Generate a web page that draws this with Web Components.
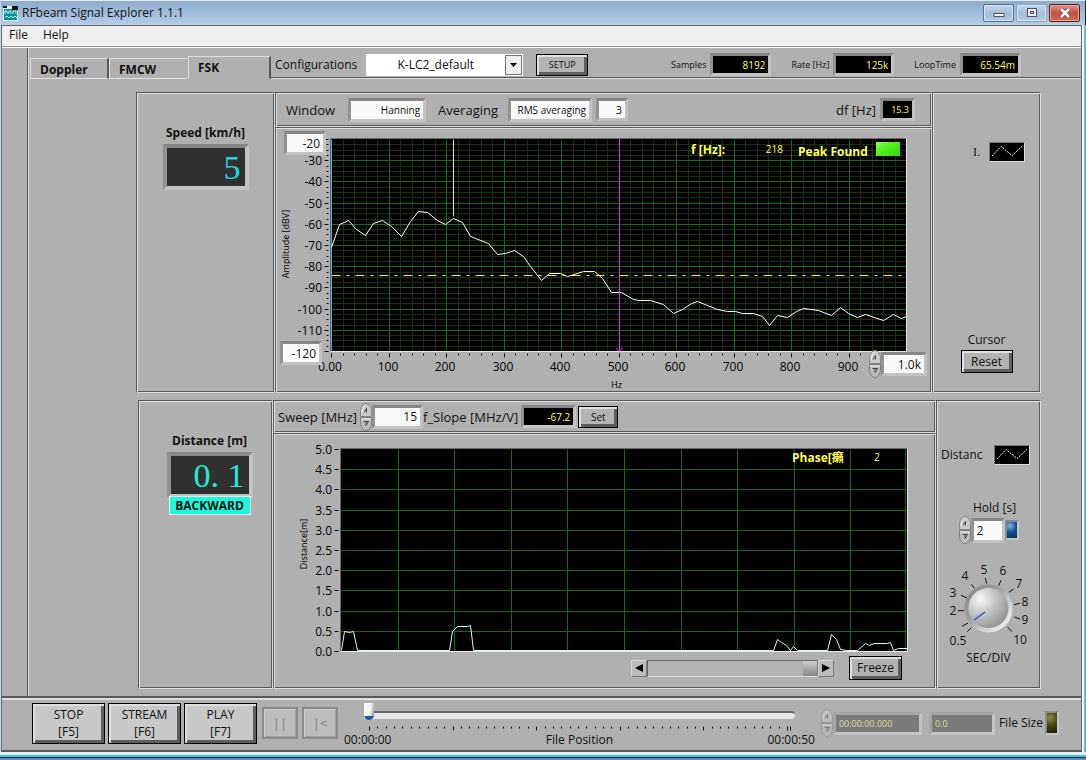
<!DOCTYPE html>
<html lang="en">
<head>
<meta charset="utf-8">
<title>RFbeam Signal Explorer 1.1.1</title>
<style>
  html, body { margin: 0; background: #b0b0b0; }
  body {
    font: 12px/16px "Open Sans", "Noto Sans CJK SC", sans-serif; color: #111;
    --dark: #585858; --light: #dedede; --face: #b0b0b0;
  }
</style>
</head>
<body>
<app-window></app-window>
<script>
const define = (name, html, setup) => {
  const tpl = document.createElement('template');
  tpl.innerHTML = html;
  customElements.define(name, class extends HTMLElement {
    connectedCallback() {
      if (this.shadowRoot) return;
      this.attachShadow({ mode: 'open' }).append(tpl.content.cloneNode(true));
      if (setup) setup(this, this.shadowRoot);
    }
  });
};

/* Engraved group box */
define('lv-panel', `
<style>
  :host { display: block; min-width: 0; box-sizing: border-box; padding: 1px; border: 1px solid;
    border-color: var(--dark) var(--light) var(--light) var(--dark);
    box-shadow: inset 1px 1px var(--light), inset -1px -1px var(--dark); }
</style><slot></slot>`);

/* Raised push button */
define('lv-button', `
<style>
  :host { display: block; }
  button { display: block; width: 100%; height: 100%; margin: 0; padding: 0 2px; box-sizing: border-box;
    font: inherit; color: #111; text-align: center; background: var(--btn, #b3b3b3);
    border: 1px solid #000; outline: 0;
    box-shadow: inset 2px 2px #dedede, inset -3px -3px #5e5e5e; }
  :host([flat]) button { color: #808080; border: 2px solid #8a8a8a;
    box-shadow: inset 1px 1px #cfcfcf, inset -1px -1px #a0a0a0; }
</style><button type="button"><slot></slot></button>`, (host, root) => {
  const b = root.querySelector('button');
  if (host.hasAttribute('flat')) b.disabled = true;
  if (host.getAttribute('name')) b.setAttribute('aria-label', host.getAttribute('name'));
});

/* Pair of increment / decrement nubs */
define('lv-nubs', `
<style>
  :host { display: block; width: 12px; height: 28px; flex: none; }
  button { display: block; width: 12px; height: 14px; padding: 0; border: 0; background: none; }
  svg { display: block; }
</style>
<button type="button" aria-label="Increment"><svg width="12" height="14">
  <path d="M.5 13.500V9C.5 4 3 .5 6 .5S11.500 4 11.500 9v4.500z" fill="#c9c9c9" stroke="#858585"/><path d="M2 10C2.500 5 4.500 2.500 6 2.500" stroke="#f4f4f4" fill="none"/>
  <path d="M4 9.500L6.500 5.500v4" fill="none" stroke="#444"/></svg></button>
<button type="button" aria-label="Decrement"><svg width="12" height="14">
  <path d="M.5.5V5c0 5 2.500 8.500 5.500 8.500S11.500 10 11.500 5V.5z" fill="#bdbdbd" stroke="#7c7c7c"/><path d="M1 2h10" stroke="#f0f0f0"/>
  <path d="M3.500 4.500h5L6 8.500v-4" fill="none" stroke="#444"/></svg></button>`);

/* Sunken value box with optional label and nubs */
define('lv-field', `
<style>
  :host { display: flex; align-items: center; }
  label { margin-right: var(--gap, 4px); white-space: pre; }
  label[hidden] { display: none; }
  input { display: block; width: var(--w, 61px); height: var(--h, 23px); box-sizing: border-box; margin: 0; padding: 0 3px;
    border: 3px solid; border-color: #868686 #c2c2c2 #c2c2c2 #929292; border-radius: 0; outline: 0;
    font: inherit; font-size: var(--size, inherit); text-align: right; background: #fafafa; color: #111; }
  :host([dark]) input { background: #000; color: #ffff60; }
  :host([dim]) input { background: #7b7b7b; color: #dede9c; text-align: left;
    border-color: #a6a6a6 #c4c4c4 #c4c4c4 #a6a6a6; opacity: 1; }
  :host([left]) input { text-align: left; }
  :host([dim]) lv-nubs { opacity: .5; }
</style>
<label for="v"></label><input id="v" type="text">`, (host, root) => {
  const input = root.querySelector('input'), label = root.querySelector('label');
  input.value = host.getAttribute('value');
  input.readOnly = host.hasAttribute('dark') || host.hasAttribute('dim');
  label.textContent = host.getAttribute('label') || '';
  if (!label.textContent) { label.hidden = true; input.setAttribute('aria-label', host.getAttribute('name')); }
  if (host.hasAttribute('nubs')) input.before(document.createElement('lv-nubs'));
});

/* Sunken ring selector */
define('lv-ring', `
<style>
  :host { display: flex; align-items: center; }
  label { margin-right: var(--gap, 10px); font-size: 13px; }
  select { width: var(--w); height: 24px; box-sizing: border-box; appearance: none; margin: 0; padding: 0 3px;
    border: 3px solid; border-color: #868686 #c2c2c2 #c2c2c2 #929292; border-radius: 0;
    font: inherit; font-size: 10px; text-align-last: right; background: #fafafa; color: #111; }
</style>
<label for="s"></label><select id="s"><option></option></select>`, (host, root) => {
  root.querySelector('label').textContent = host.getAttribute('label');
  root.querySelector('option').textContent = host.getAttribute('value');
});

define('lv-led', `
<style>
  :host { display: block; width: 14px; height: 20px; flex: none; box-sizing: border-box; border: 2px solid;
    border-color: #8a8a8a #c6c6c6 #c6c6c6 #8a8a8a;
    background: radial-gradient(circle at 30% 25%, var(--hot), var(--on) 45%, var(--off)); }
</style>`);

/* Plot legend sample */
define('plot-legend', `
<style>
  :host { display: flex; align-items: center; justify-content: flex-end; }
  svg { display: block; background: #000; border: 1px solid #777; border-right-color: #ddd; border-bottom-color: #ddd; }
</style><slot></slot>
<svg width="34" height="18" viewBox="0 0 34 18"><path d="M2 13L11 3.500l11 9L32 3.500" fill="none" stroke="#fff" stroke-dasharray="2 1"/></svg>`);

/* Large digital readout with a caption */
define('big-readout', `
<style>
  :host { display: flex; flex-direction: column; align-items: center; }
  label { font-weight: 700; margin-bottom: 3px; }
  output { box-sizing: border-box; width: 86px; height: 46px; padding-right: 4px; text-align: right;
    border: 4px solid; border-color: #868686 #c4c4c4 #c4c4c4 #929292; background: #303030; color: var(--ink, #22d6e6);
    font: 34px/40px "Liberation Serif", serif; }
  .dot { display: inline-block; width: 17px; text-align: left; }
</style><label for="o"></label><output id="o"></output>`, (host, root) => {
  root.querySelector('label').textContent = host.getAttribute('label');
  root.querySelector('output').innerHTML = host.getAttribute('value').replace('.', '<span class="dot">.</span>');
});

/* Shared chart drawing */
const line = (x1, y1, x2, y2, c, extra = '') =>
  `<path d="M${Math.round(x1) + .5} ${Math.round(y1) + .5}L${Math.round(x2) + .5} ${Math.round(y2) + .5}" stroke="${c}" ${extra}/>`;
const text = (x, y, s, extra = '') => `<text x="${x}" y="${y}" ${extra}>${s}</text>`;
const trace = (pts, box, w, h, c) => `<polyline fill="none" stroke="${c}" points="${pts.split(' ').map(p => {
  const [x, y] = p.split(',').map(Number);
  return (box.x + x * box.w / w + .5).toFixed(1) + ',' + (box.y + y * box.h / h + .5).toFixed(1);
}).join(' ')}"/>`;
const chart = (svg, draw) => {
  const run = () => { svg.innerHTML = draw(svg.clientWidth, svg.clientHeight); };
  run();
  new ResizeObserver(run).observe(svg);
};
const frame = b => `<rect x="${b.x}" y="${b.y}" width="${b.w}" height="${b.h}"/>`;
const edge = b => line(b.x - 1, b.y - 1, b.x + b.w, b.y - 1, '#6a6a6a') + line(b.x - 1, b.y - 1, b.x - 1, b.y + b.h, '#6a6a6a')
  + line(b.x + b.w, b.y - 1, b.x + b.w, b.y + b.h, '#e8e8e8') + line(b.x - 1, b.y + b.h, b.x + b.w, b.y + b.h, '#e8e8e8');

const SPECTRUM = '0,108 8,85 17,81 25,90 34,96 42,84 51,81 60,87 70,97 79,82 87,72 96,73 106,81 114,85 122,79 131,83 139,97 157,104 166,115 174,114 183,111 192,117 199,127 210,141 218,134 229,134 236,137 246,134 252,132 263,132 271,139 280,153 290,153 302,160 307,161 319,161 332,165 342,174 351,170 360,164 366,162 386,170 396,172 404,172 411,174 422,174 431,177 438,186 446,176 456,178 465,172 472,169 487,171 500,176 509,168 517,174 526,178 534,175 543,178 552,181 562,175 570,179 575,177';
const DISTANCE = '0,201 3,182 8,183 12,182 16,201 108,201 111,182 116,177 126,177 129,176 132,201 432,201 436,190 440,193 445,196 449,201 452,197 456,201 486,201 490,185 495,190 499,200 505,201 516,201 524,194 528,196 533,194 546,194 549,193 552,201 557,199 566,199';

define('spectrum-plot', `
<style>
  :host { display: block; position: relative; height: 100%; min-height: 262px; }
  svg { display: block; width: 100%; height: 262px; font: inherit; overflow: visible; }
  lv-field { position: absolute; --h: 24px; }
  .top { left: 7px; top: 2px; --w: 42px; }
  .bottom { left: 3px; bottom: 26px; --w: 42px; }
  .right { right: 3px; bottom: 13px; --w: 46px; }
</style>
<svg role="img" aria-label="Amplitude spectrum"></svg>
<lv-field class="top" name="Maximum amplitude" value="-20"></lv-field>
<lv-field class="bottom" name="Minimum amplitude" value="-120"></lv-field>
<lv-field class="right" name="Maximum frequency" value="1.0k" nubs></lv-field>`, (host, root) => {
  chart(root.querySelector('svg'), (W, H) => {
    const b = { x: 54, y: 10, w: W - 78, h: H - 50 };
    let s = frame(b);
    for (let i = 1; i < 50; i++) if (i % 5) s += line(b.x + i * b.w / 50, b.y, b.x + i * b.w / 50, b.y + b.h - 1, '#1c3010');
    for (let i = 1; i < 40; i++) if (i % 4) s += line(b.x, b.y + i * b.h / 40, b.x + b.w - 1, b.y + i * b.h / 40, '#1c3010');
    for (let i = 1; i < 10; i++) {
      s += line(b.x + i * b.w / 10, b.y, b.x + i * b.w / 10, b.y + b.h - 1, '#176a1c');
      s += line(b.x, b.y + i * b.h / 10, b.x + b.w - 1, b.y + i * b.h / 10, '#176a1c');
    }
    s += edge(b);
    for (let i = 0; i <= 40; i++) { const y = b.y + i * b.h / 40; s += line(b.x - (i % 4 ? 5 : 7), y, b.x - 3, y, '#111'); }
    for (let i = 0; i < 50; i++) { const x = b.x + i * b.w / 50; s += line(x, b.y + b.h + 2, x, b.y + b.h + (i % 5 ? 4 : 6), '#111'); }
    for (let i = 1; i < 10; i++) s += text(b.x - 9, Math.round(b.y + i * b.h / 10) + 5, -20 - i * 10, 'text-anchor="end"');
    for (let i = 0; i < 10; i++) s += text(Math.round(b.x + i * b.w / 10) - 1, b.y + b.h + 20, i ? i * 100 : '0.00', 'text-anchor="middle"');
    s += text(b.x + b.w / 2 - 2, b.y + b.h + 37, 'Hz', 'text-anchor="middle" font-size="9"');
    s += `<text transform="translate(12 ${b.y + b.h / 2 - 1}) rotate(-90)" text-anchor="middle" font-size="9">Amplitude [dBV]</text>`;
    s += line(b.x, b.y + 136, b.x + b.w - 1, b.y + 136, '#ffe83c', 'stroke-dasharray="9 6 3 6"');
    s += line(b.x, b.y, b.x, b.y + b.h - 1, '#4aa8e0');
    s += trace(SPECTRUM, b, 575, 212, '#fff');
    s += line(b.x + b.w * .2122, b.y, b.x + b.w * .2122, b.y + 77, '#ffe45a');
    const m = Math.round(b.x + b.w / 2);
    s += `<rect x="${m}" y="${b.y}" width="1" height="${b.h}" fill="#e030e0"/>`
      + `<path d="M${m - 3} ${b.y + b.h - 3}l3.500 3l3.500-3" fill="none" stroke="#e030e0"/>`;
    const r = b.x + b.w, y = b.y + 15;
    s += `<g fill="#ffff55" font-weight="700">` + text(r - 215, y, 'f [Hz]:') + text(r - 108, y + 2, 'Peak Found') + `</g>`
      + text(r - 123, b.y + 14, '218', 'fill="#ffff55" font-size="10" text-anchor="end"')
      + `<defs><linearGradient id="g" x2="1" y2="1"><stop offset="0" stop-color="#8cff5c"/><stop offset=".4" stop-color="#52f01c"/><stop offset="1" stop-color="#3cd40c"/></linearGradient></defs>`
      + `<rect x="${r - 30}" y="${b.y + 3}" width="24" height="14" fill="url(#g)"/>`;
    return s;
  });
});

define('distance-plot', `
<style>
  :host { display: block; min-height: 252px; }
  svg { display: block; width: 100%; height: 218px; font: inherit; overflow: visible; }
  .bar { display: flex; align-items: center; justify-content: flex-end; padding-right: 32px; height: 30px; }
  .scroll { display: flex; width: 203px; height: 17px; margin-right: 15px; }
  .scroll button { width: 16px; padding: 0; border: 1px solid; border-color: #d6d6d6 #777 #777 #d6d6d6; background: #bcbcbc; }
  .scroll svg { width: 14px; height: 14px; }
  input { appearance: none; flex: 1; min-width: 0; margin: 0; box-sizing: border-box; border: 1px solid; border-color: #666 #ddd #ddd #666; background: #b3b3b3; border-right: 0; }
  input::-webkit-slider-thumb { appearance: none; width: 15px; height: 15px; background: linear-gradient(#cfcfcf, #858585); border-right: 1px solid #777; }
  lv-button { width: 53px; height: 24px; }
</style>
<svg role="img" aria-label="Distance over time"></svg>
<div class="bar">
  <div class="scroll">
    <button type="button" aria-label="Scroll left"><svg viewBox="0 0 14 14"><path d="M11 3v8L3 7z"/></svg></button>
    <input type="range" min="0" max="100" value="100" aria-label="Time scroll">
    <button type="button" aria-label="Scroll right"><svg viewBox="0 0 14 14"><path d="M3 3v8l8-4z"/></svg></button>
  </div>
  <lv-button>Freeze</lv-button>
</div>`, (host, root) => {
  chart(root.querySelector('svg'), (W, H) => {
    const b = { x: 66, y: 14, w: W - 93, h: H - 16 };
    let s = frame(b);
    for (let i = 1; i < 10; i++) {
      s += line(b.x + i * b.w / 10, b.y, b.x + i * b.w / 10, b.y + b.h - 1, '#176a1c');
      s += line(b.x, b.y + i * b.h / 10, b.x + b.w - 1, b.y + i * b.h / 10, '#176a1c');
    }
    s += line(b.x + b.w - 2, b.y, b.x + b.w - 2, b.y + b.h, '#176a1c') + edge(b);
    for (let i = 0; i <= 10; i++) {
      const y = Math.round(b.y + i * b.h / 10);
      s += line(b.x - 7, y, b.x - 3, y, '#111') + text(b.x - 9, y + 5, (5 - i / 2).toFixed(1), 'text-anchor="end"');
    }
    s += `<text transform="translate(32 ${b.y + b.h / 2 - 6}) rotate(-90)" text-anchor="middle" font-size="9">Distance[m]</text>`;
    s += trace(DISTANCE, b, 566, 202, '#d8fff4');
    s += text(b.x + b.w - 115, b.y + 13, 'Phase[癩', 'fill="#ffff55" font-weight="700"')
      + text(b.x + b.w - 33, b.y + 12, '2', 'fill="#ffff55" font-size="10"');
    return s;
  });
});

define('sec-knob', `
<style>
  :host { display: flex; flex-direction: column; align-items: center; }
  svg { display: block; font: inherit; overflow: visible; }
</style>
<svg width="96" height="88" role="slider" aria-label="SEC/DIV" aria-valuemin="0.5" aria-valuemax="10" aria-valuenow="1">
  <defs>
    <radialGradient id="k" cx=".3" cy=".28" r=".85"><stop offset="0" stop-color="#f8f8f8"/><stop offset=".45" stop-color="#c4c4c4"/><stop offset="1" stop-color="#8c8c8c"/></radialGradient>
    <linearGradient id="b" x2="1" y2="1"><stop offset="0" stop-color="#808080"/><stop offset=".45" stop-color="#a4a4a4"/><stop offset=".65" stop-color="#d0d0d0"/><stop offset="1" stop-color="#fff"/></linearGradient>
  </defs>
  <path stroke="#111" d="M30.300 65.700l-4 4M27 61l-6 3.300M23 48.700h-6M26.300 36.300l-6.300-3M33.700 26.300l-3.400-4M45.700 21.700l-1.400-5.700M57.700 23.700l2.300-5.400M68 30.300l4.700-3.300M73 42.700l6-1.400M73.300 55l5.700 2M66.300 64.700l4.700 5"/>
  <circle cx="47.500" cy="46.500" r="24" fill="url(#b)"/>
  <circle cx="47.500" cy="46" r="20" fill="url(#k)"/>
  <path d="M33 58l11-8" stroke="#2450c8" stroke-width="1.500"/>
  <g text-anchor="middle" fill="#111">
    <text x="17" y="83">0.5</text><text x="12" y="53">2</text><text x="12" y="35">3</text><text x="24" y="18">4</text><text x="43" y="12">5</text>
    <text x="62" y="13">6</text><text x="78" y="26">7</text><text x="84" y="44">8</text><text x="84" y="62">9</text><text x="79" y="82">10</text>
  </g>
</svg>
<span>SEC/DIV</span>`);

define('title-bar', `
<style>
  :host { display: flex; align-items: center; height: 25px; padding: 0 5px 0 2px; box-sizing: border-box;
    background: linear-gradient(#8faccc, #9db9d8 40%, #b4cde8); border-top: 1px solid #e8eef6; }
  svg { display: block; }
  .name { margin: 0 auto 0 4px; }
  button { display: flex; align-items: center; justify-content: center; width: 31px; height: 18px; margin-left: 2px; padding: 0; border: 1px solid #55708f;
    border-radius: 2px; background: linear-gradient(#c6d8ec, #a3bddb 50%, #b3cbe6); box-shadow: inset 0 0 0 1px #d8e6f4; }
  .close { border-color: #5a2018; background: linear-gradient(#dc9a8c, #c4503c 50%, #cc6a54); box-shadow: inset 0 0 0 1px #e8a898; }
  .max { border-color: #8ba5c4; }
</style>
<svg width="15" height="15"><path fill="#dff" d="M0 0h15v15H0z"/><path fill="#0a8c94" d="M1 3h13v11H1z"/><path fill="#111" d="M9 0h6v4H9zM0 0h4v2H0z"/>
  <path d="M2 8V5h2v2h2V5h2v3M10 8V5h3v3M2 11l2-1 2 2 2-2 2 2 2-2 2 2" fill="none" stroke="#aef4ee"/></svg>
<span class="name">RFbeam Signal Explorer 1.1.1</span>
<button type="button" aria-label="Minimize"><svg width="12" height="10"><rect x="1" y="5.500" width="10" height="3" fill="#fff" stroke="#555"/></svg></button>
<button class="max" type="button" aria-label="Maximize"><svg width="12" height="10"><rect x="1.500" y=".5" width="9" height="8" fill="#eef" stroke="#555"/><rect x="4.500" y="3.500" width="3" height="2" fill="#b3cbe6" stroke="#555"/></svg></button>
<button class="close" type="button" aria-label="Close"><svg width="12" height="10"><path d="M2 1l8 8M10 1L2 9" stroke="#644" stroke-width="4"/><path d="M2 1l8 8M10 1L2 9" stroke="#fff" stroke-width="2.500"/></svg></button>`);

define('menu-bar', `
<style>
  :host { display: flex; height: 22px; box-sizing: border-box; padding: 0 7px; gap: 15px; background: #f0f0f0;
    border-top: 1px solid #666; border-bottom: 1px solid #909090; }
  button { font: inherit; color: inherit; padding: 0; border: 0; background: none; height: 18px; }
</style><button type="button">File</button><button type="button">Help</button>`);

define('tool-strip', `
<style>
  :host { display: flex; align-items: flex-end; height: 31px; padding-left: 2px; }
  .tab { width: 79px; height: 21px; box-sizing: border-box; padding: 0 0 0 9px; overflow: hidden; text-align: left; font: inherit; font-weight: 700; color: #111;
    border: 1px solid; border-color: var(--light) var(--dark) var(--light) var(--light); border-right-width: 2px; background: none; line-height: 22px; }
  .tab.mid { border-right-width: 1px; border-right-color: var(--face); }
  .tab.on { width: 83px; height: 23px; border-bottom-color: transparent; }
  .tools { flex: 1; display: flex; align-items: center; height: 31px; box-sizing: border-box; padding: 3px 60px 0 4px;
    border-bottom: 1px solid var(--light); box-shadow: inset 0 -1px var(--dark); }
  .tools > label { margin-right: 9px; }
  .combo { position: relative; width: 157px; height: 22px; margin-right: 13px; background: #fff; }
  select { appearance: none; width: 100%; height: 22px; border: 0; margin: 0; padding: 0 18px 0 0; font: inherit; background: #fff; color: #111; text-align-last: center; }
  .combo svg { position: absolute; right: 1px; top: 1px; pointer-events: none; }
  lv-button { width: 52px; height: 22px; font-size: 9px; }
  .reads { display: flex; gap: 20px; margin-left: auto; font-size: 9px; --size: 10px; }
</style>
<button class="tab" type="button">Doppler</button><button class="tab mid" type="button">FMCW</button><button class="tab on" type="button">FSK</button>
<div class="tools">
  <label for="cfg">Configurations</label>
  <div class="combo"><select id="cfg"><option>K-LC2_default</option></select>
    <svg width="17" height="20"><rect x=".5" y=".5" width="16" height="19" fill="#eee" stroke="#777"/><path d="M5 8h7l-3.500 4z"/></svg></div>
  <lv-button>SETUP</lv-button>
  <div class="reads">
    <lv-field dark label="Samples" value="8192"></lv-field>
    <lv-field dark label="Rate [Hz]" value="125k"></lv-field>
    <lv-field dark label="LoopTime" value="65.54m"></lv-field>
  </div>
</div>`);

define('file-bar', `
<style>
  :host { display: flex; align-items: center; height: 54px; box-sizing: border-box; padding: 0 22px 4px 30px;
    border-bottom: 2px solid var(--dark); border-top: 2px solid var(--light); }
  .big { width: 73px; height: 41px; margin-right: 3px; --btn: #c8c8c8; line-height: 17px; }
  .small { width: 36px; height: 32px; margin: 0 2px; --btn: #bdbdbd; font-size: 13px; }
  .seek { flex: 1; min-width: 0; margin: 8px 0 0 24px; height: 42px; }
  input { appearance: none; display: block; width: 100%; height: 18px; margin: 0; background: none; }
  input::-webkit-slider-runnable-track { height: 8px; background: #e6e6e6; border-top: 2px solid #6a6a6a; box-sizing: border-box; border-radius: 0 4px 4px 0; }
  input::-webkit-slider-thumb { appearance: none; width: 10px; height: 17px; margin-top: -10px; border-radius: 1px 1px 5px 5px;
    background: linear-gradient(100deg, #fff, #f4f4f4 60%, #999) 0 0 / 10px 13px no-repeat, #2a50b8; }
  .ticks { display: block; width: 100%; height: 8px; }
  .names { display: grid; grid-template-columns: 1fr 1fr 1fr; text-align: center; margin: 0 -20px; }
  .names :first-child { text-align: left; } .names :last-child { text-align: right; }
  .t { margin-left: 26px; font-size: 9px; --w: 89px; --gap: 0; }
  .n { margin: 0 4px 0 7px; font-size: 9px; --w: 66px; }
  .l { white-space: nowrap; margin-right: 2px; }
  lv-led { height: 24px; --hot: #8c8a50; --on: #48460a; --off: #1c1a00; }
</style>
<lv-button class="big">STOP<br>[F5]</lv-button><lv-button class="big">STREAM<br>[F6]</lv-button><lv-button class="big">PLAY<br>[F7]</lv-button>
<lv-button class="small" flat name="Pause">||</lv-button><lv-button class="small" flat name="Rewind">|&lt;</lv-button>
<div class="seek">
  <input id="pos" type="range" min="0" max="50" value="0">
  <svg class="ticks"></svg>
  <div class="names"><span>00:00:00</span><label for="pos">File Position</label><span>00:00:50</span></div>
</div>
<lv-field class="t" dim nubs name="File time" value="00:00:00.000"></lv-field>
<lv-field class="n" dim name="File size" value="0.0"></lv-field>
<span class="l">File Size</span><lv-led></lv-led>`, (host, root) => {
  chart(root.querySelector('.ticks'), W => {
    let s = '';
    for (let i = 0; i <= 50; i++) { const x = 5 + i * (W - 13) / 50; s += line(x, 2, x, i % 10 ? 4 : 6, '#111'); }
    return s + line(W - 5, 2, W - 5, 6, '#111');
  });
});

define('app-window', `
<style>
  :host { display: flex; flex-direction: column; min-height: 100vh; box-sizing: border-box; background: var(--face);
    border-left: 1px solid #c8d8e8; }
  .client { flex: 1; display: flex; flex-direction: column; margin-right: 4px; border-left: 1px solid #666; border-right: 1px solid #666;
    box-shadow: 1px 0 #fff, 2px 0 #fff, 4px 0 #4cc4dc; }
  title-bar { border-right: 1px solid #223; }
  .page { flex: 1; display: grid; grid-template-columns: 26px 1fr; border-top: 1px solid #fff; border-bottom: 2px solid var(--dark); }
  .rail { border-right: 1px solid var(--dark); box-shadow: 1px 0 var(--light); }
  .body { padding: 13px 40px 6px 108px; display: grid; gap: 7px; align-content: start; }
  .row { display: grid; grid-template-columns: 139px 1fr 109px; }
  .row.low { grid-template-columns: 135px 1fr 105px; margin-left: 2px; }
  .mid { min-width: 0; display: flex; flex-direction: column; }
  .head { display: flex; align-items: center; height: 35px; }
  .low .head { height: 33px; }
  lv-panel.side { display: flex; flex-direction: column; align-items: center; }
  .low lv-panel.dist { padding-left: 9px; }
  big-readout { margin-top: 31px; }
  .state { width: 82px; box-sizing: border-box; height: 19px; margin-top: -2px; border: 1px solid #eee; background: #1cf8dc; font-weight: 700; line-height: 17px; text-align: center; position: relative; }
  .low big-readout { --ink: #24ecd4; margin-top: 31px; }
  .opts { padding: 0 16px 0 10px; }
  .opts lv-field { font-size: 13px; --size: 11px; }
  .df { margin-left: auto; --w: 35px; }
  .opts .df { --size: 9px; --gap: 4px; }
  .averaging { margin-left: 12px; }
  .count { --w: 32px; margin-left: 4px; }
  .sweep { padding-left: 4px; font-size: 13px; --gap: 2px; --size: 12px; }
  .sweep lv-field { --gap: 3px; }
  .sweep lv-button { width: 40px; height: 22px; font-size: 10px; margin-left: 2px; }
  .one { align-self: stretch; margin: 48px 14px auto; gap: 9px; font: 12px/16px "Liberation Serif", serif; }
  .reset { width: 52px; height: 23px; margin: 2px 0 18px; }
  .two { align-self: stretch; margin: 43px 9px 0 3px; justify-content: space-between; }
  .hold { display: flex; align-items: center; --w: 34px; --h: 25px; --gap: 0; margin-bottom: 18px; }
  .holdlabel { margin: 35px 0 0 12px; }
  lv-led.blue { --hot: #88b8e8; --on: #125090; --off: #062c58; }
  .desk { height: 8px; background: linear-gradient(#eee 0 2px, #bfeef6 2px 3px, #4cc4dc 3px 5px, #102840 5px 6px, #5a8cc0 6px); margin-left: -1px; }
</style>
<title-bar></title-bar>
<div class="client">
  <menu-bar></menu-bar>
  <div class="page">
    <div class="rail"></div>
    <div>
      <tool-strip></tool-strip>
      <div class="body">
        <div class="row">
          <lv-panel class="side"><big-readout label="Speed [km/h]" value="5"></big-readout></lv-panel>
          <div class="mid">
            <lv-panel class="head opts">
              <lv-ring label="Window" value="Hanning" style="--w:78px;--gap:13px"></lv-ring>
              <lv-ring class="averaging" label="Averaging" value="RMS averaging" style="--w:84px"></lv-ring>
              <lv-field class="count" name="Averages" value="3"></lv-field>
              <lv-field class="df" dark label="df [Hz]" value="15.3"></lv-field>
            </lv-panel>
            <lv-panel><spectrum-plot></spectrum-plot></lv-panel>
          </div>
          <lv-panel class="side"><plot-legend class="one">I.</plot-legend><span>Cursor</span><lv-button class="reset">Reset</lv-button></lv-panel>
        </div>
        <div class="row low">
          <lv-panel class="side dist"><big-readout label="Distance [m]" value="0.1"></big-readout><div class="state">BACKWARD</div></lv-panel>
          <div class="mid">
            <lv-panel class="head sweep">
              <lv-field label="Sweep [MHz]" value="15" nubs style="--w:51px;--h:24px"></lv-field>
              <lv-field dark label="f_Slope [MHz/V]" value="-67.2" style="--w:55px;--size:10px"></lv-field>
              <lv-button>Set</lv-button>
            </lv-panel>
            <lv-panel><distance-plot></distance-plot></lv-panel>
          </div>
          <lv-panel class="side"><plot-legend class="two">Distanc</plot-legend>
            <span class="holdlabel">Hold [s]</span>
            <div class="hold"><lv-field left nubs name="Hold [s]" value="2"></lv-field><lv-led class="blue"></lv-led></div>
            <sec-knob></sec-knob></lv-panel>
        </div>
      </div>
    </div>
  </div>
  <file-bar></file-bar>
</div>
<div class="desk"></div>`);
</script>
</body>
</html>
